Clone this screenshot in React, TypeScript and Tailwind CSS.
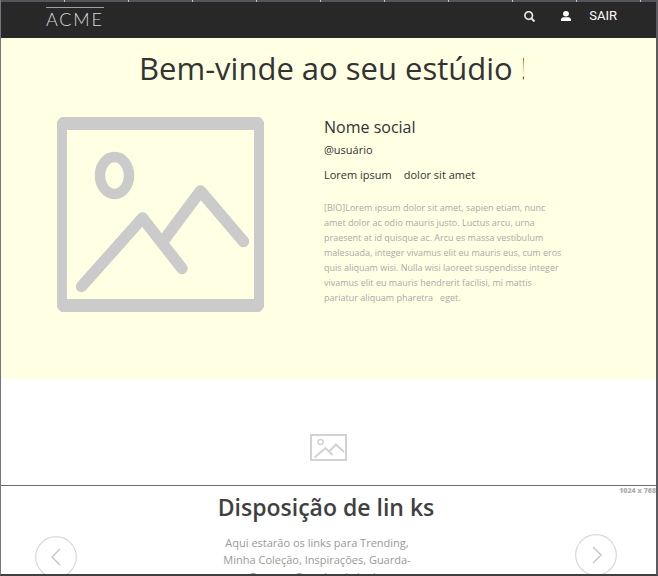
const ticks = Array.from({ length: 10 }, (_, i) => i);

function PictureIcon({ className }: { className: string }) {
  return (
    <svg className={className} viewBox="0 0 207 195" preserveAspectRatio="none" fill="none" stroke="#cbcbcb" aria-hidden="true">
      <path fill="#cbcbcb" stroke="none" fillRule="evenodd" d="M5 0H202Q204 0 207 5V190Q204 195 202 195H5Q3 195 0 190V5Q3 0 5 0ZM10 13V182H197V13Z" />
      <ellipse cx="57.5" cy="58.5" rx="14.5" ry="18.5" strokeWidth="10.5" />
      <path d="M24.500 169.500L85.500 101L125 151.500M107 123L143.500 74L186.500 124.500" strokeWidth="11.500" strokeLinecap="round" strokeLinejoin="round" />
    </svg>
  );
}

function SmallPictureIcon() {
  return (
    <svg className="h-[27px] w-[37px]" viewBox="0 0 37 27" fill="none" stroke="#d2d2d2" aria-hidden="true">
      <rect x="1" y="1" width="35" height="25" strokeWidth="2" />
      <circle cx="10.500" cy="8" r="2.500" strokeWidth="1.500" />
      <path d="M4.500 23.500L15.500 14L22.500 21M19 17.500L26 10.500L34 18" strokeWidth="2" />
    </svg>
  );
}

function ArrowButton({ label, d }: { label: string; d: string }) {
  return (
    <button type="button" aria-label={label} className="size-[42px] shrink-0">
      <svg viewBox="0 0 42 42" fill="none" aria-hidden="true">
        <circle cx="21" cy="21" r="20.300" stroke="#d8d8d8" strokeWidth="1.200" />
        <path d={d} stroke="#c8c8c8" strokeWidth="1.500" />
      </svg>
    </button>
  );
}

export default function App() {
  return (
    <div className="flex h-screen flex-col overflow-hidden border-r-2 border-b-2 border-l border-r-[#5c5b60] border-b-[#403f44] border-l-[#77767a] bg-white font-['Open_Sans',sans-serif] text-[#333333]">
      <div className="flex h-[2px] shrink-0 overflow-hidden bg-[#55545b]">
        {ticks.map((tick) => (
          <span key={tick} className="w-[64px] shrink-0 border-r border-[#c4c4c8]" />
        ))}
      </div>

      <header className="flex h-9 shrink-0 items-start justify-between bg-[#282828] pr-[39px] pl-[45px]">
        <a href="#inicio" className="mt-[5px] border-t border-[#a0a0a0] font-[Lato,sans-serif] text-[18px] leading-[22px] font-light tracking-widest text-[#d8d8d8]">
          ACME
        </a>
        <nav className="mt-1 flex items-center text-white">
          <button type="button" aria-label="Buscar" className="mr-[26px]">
            <svg className="size-[11px]" viewBox="0 0 11 11" fill="none" stroke="#e2e2e2" aria-hidden="true">
              <circle cx="4.700" cy="4.500" r="3.800" strokeWidth="1.700" />
              <path d="M7.300 7.300L10.500 10.500" strokeWidth="2" />
            </svg>
          </button>
          <button type="button" aria-label="Perfil" className="mr-[18px]">
            <svg className="size-[10px]" viewBox="0 0 10 10" fill="#ffffff" aria-hidden="true">
              <ellipse cx="5" cy="2.700" rx="2.900" ry="2.700" />
              <path d="M0 10V8.500C0 6.800 2 6.200 3.200 6.200H6.800C8 6.200 10 6.800 10 8.500V10Z" />
            </svg>
          </button>
          <a href="#sair" className="font-[Roboto,sans-serif] text-[13px] leading-5">SAIR</a>
        </nav>
      </header>

      <section className="h-[341px] shrink-0 bg-[#ffffe3] pt-[7px]">
        <h1 className="ml-[138px] w-[385px] overflow-hidden text-[31px] leading-[46px] whitespace-nowrap">
          Bem-vinde ao seu estúdio !
        </h1>
        <div className="flex items-start gap-[60px] pt-[26px] pl-14">
          <PictureIcon className="h-[195px] w-[207px] shrink-0" />
          <div className="w-[240px] shrink-0">
            <h2 className="text-[16px] leading-[20px]">Nome social</h2>
            <p className="mt-[5px] text-[11px] leading-[15px]">@usuário</p>
            <p className="mt-[10px] flex gap-3 text-[11px] leading-[15px]">
              <span>Lorem ipsum</span>
              <span>dolor sit amet</span>
            </p>
            <p className="mt-[18px] text-[9px] leading-[15px] whitespace-pre text-[#aaaaaa]">
              {"[BIO]Lorem ipsum dolor sit amet, sapien etiam, nunc\namet dolor ac odio mauris justo. Luctus arcu, urna\npraesent at id quisque ac. Arcu es massa vestibulum\nmalesuada, integer vivamus elit eu mauris eus, cum eros\nquis aliquam wisi. Nulla wisi laoreet suspendisse integer\nvivamus elit eu mauris hendrerit facilisi, mi mattis\npariatur aliquam pharetra   eget."}
            </p>
          </div>
        </div>
      </section>

      <div className="flex h-[107px] shrink-0 justify-center border-b border-[#6d6c70] pt-[55px]">
        <SmallPictureIcon />
      </div>

      <section className="shrink-0">
        <div className="flex justify-end text-[7px] leading-[10px] font-extrabold text-[#b0b0b0]">
          <span>1024 x 768</span>
        </div>
        <div className="flex items-start justify-between pr-[39px] pl-[34px]">
          <div className="pt-10">
            <ArrowButton label="Anterior" d="M25 13L17 21L25 29" />
          </div>
          <div className="-mt-1 text-center">
            <h2 className="text-[23px] leading-[30px] font-semibold text-[#404040]">Disposição de lin ks</h2>
            <p className="mt-3 pr-[18px] text-[11px] leading-[17px] whitespace-pre-line text-[#999999]">
              {"Aqui estarão os links para Trending,\nMinha Coleção, Inspirações, Guarda-\nRoupa e Grandes de looks"}
            </p>
          </div>
          <div className="pt-[38px]">
            <ArrowButton label="Próximo" d="M18 13L26 21L18 29" />
          </div>
        </div>
      </section>
    </div>
  );
}
